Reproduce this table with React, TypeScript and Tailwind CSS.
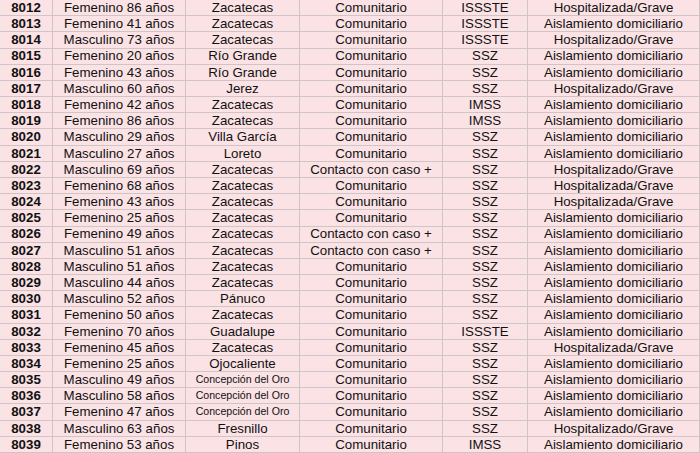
import React from 'react';

type Row = [string, string, string, string, string, string];

const rows: Row[] = [
    ["8012", "Femenino 86 años", "Zacatecas", "Comunitario", "ISSSTE", "Hospitalizada/Grave"],
    ["8013", "Femenino 41 años", "Zacatecas", "Comunitario", "ISSSTE", "Aislamiento domiciliario"],
    ["8014", "Masculino 73 años", "Zacatecas", "Comunitario", "ISSSTE", "Hospitalizado/Grave"],
    ["8015", "Femenino 20 años", "Río Grande", "Comunitario", "SSZ", "Aislamiento domiciliario"],
    ["8016", "Femenino 43 años", "Río Grande", "Comunitario", "SSZ", "Aislamiento domiciliario"],
    ["8017", "Masculino 60 años", "Jerez", "Comunitario", "SSZ", "Hospitalizado/Grave"],
    ["8018", "Femenino 42 años", "Zacatecas", "Comunitario", "IMSS", "Aislamiento domiciliario"],
    ["8019", "Femenino 86 años", "Zacatecas", "Comunitario", "IMSS", "Aislamiento domiciliario"],
    ["8020", "Masculino 29 años", "Villa García", "Comunitario", "SSZ", "Aislamiento domiciliario"],
    ["8021", "Masculino 27 años", "Loreto", "Comunitario", "SSZ", "Aislamiento domiciliario"],
    ["8022", "Masculino 69 años", "Zacatecas", "Contacto con caso +", "SSZ", "Hospitalizado/Grave"],
    ["8023", "Femenino 68 años", "Zacatecas", "Comunitario", "SSZ", "Hospitalizada/Grave"],
    ["8024", "Femenino 43 años", "Zacatecas", "Comunitario", "SSZ", "Hospitalizada/Grave"],
    ["8025", "Femenino 25 años", "Zacatecas", "Comunitario", "SSZ", "Aislamiento domiciliario"],
    ["8026", "Femenino 49 años", "Zacatecas", "Contacto con caso +", "SSZ", "Aislamiento domiciliario"],
    ["8027", "Masculino 51 años", "Zacatecas", "Contacto con caso +", "SSZ", "Aislamiento domiciliario"],
    ["8028", "Masculino 51 años", "Zacatecas", "Comunitario", "SSZ", "Aislamiento domiciliario"],
    ["8029", "Masculino 44 años", "Zacatecas", "Comunitario", "SSZ", "Aislamiento domiciliario"],
    ["8030", "Masculino 52 años", "Pánuco", "Comunitario", "SSZ", "Aislamiento domiciliario"],
    ["8031", "Femenino 50 años", "Zacatecas", "Comunitario", "SSZ", "Aislamiento domiciliario"],
    ["8032", "Femenino 70 años", "Guadalupe", "Comunitario", "ISSSTE", "Aislamiento domiciliario"],
    ["8033", "Femenino 45 años", "Zacatecas", "Comunitario", "SSZ", "Hospitalizada/Grave"],
    ["8034", "Femenino 25 años", "Ojocaliente", "Comunitario", "SSZ", "Aislamiento domiciliario"],
    ["8035", "Masculino 49 años", "Concepción del Oro", "Comunitario", "SSZ", "Aislamiento domiciliario"],
    ["8036", "Masculino 58 años", "Concepción del Oro", "Comunitario", "SSZ", "Aislamiento domiciliario"],
    ["8037", "Femenino 47 años", "Concepción del Oro", "Comunitario", "SSZ", "Aislamiento domiciliario"],
    ["8038", "Masculino 63 años", "Fresnillo", "Comunitario", "SSZ", "Hospitalizado/Grave"],
    ["8039", "Femenino 53 años", "Pinos", "Comunitario", "IMSS", "Aislamiento domiciliario"],
];

const cell = "flex items-center justify-center border-r border-b border-[#cfc4c6] whitespace-nowrap overflow-hidden leading-none";

export default function App() {
    return (
        <div className="w-[700px] h-[453px] overflow-hidden bg-[#fae2e5] text-[#111] font-['Liberation_Sans',Arial,sans-serif] text-[13.3px]">
            <div className="grid h-[453px] grid-cols-[53px_133px_114px_143px_85px_172px] grid-rows-[repeat(28,1fr)]">
                {rows.map((r) => (
                    <React.Fragment key={r[0]}>
                        <div className={`${cell} font-bold`}>{r[0]}</div>
                        <div className={cell}>{r[1]}</div>
                        {r[2].length > 14 ? (
                            <div className={`${cell} !items-start pt-[2px] text-[10.6px]`}>{r[2]}</div>
                        ) : (
                            <div className={cell}>{r[2]}</div>
                        )}
                        <div className={cell}>{r[3]}</div>
                        <div className={cell}>{r[4]}</div>
                        <div className={cell}>{r[5]}</div>
                    </React.Fragment>
                ))}
            </div>
        </div>
    );
}
